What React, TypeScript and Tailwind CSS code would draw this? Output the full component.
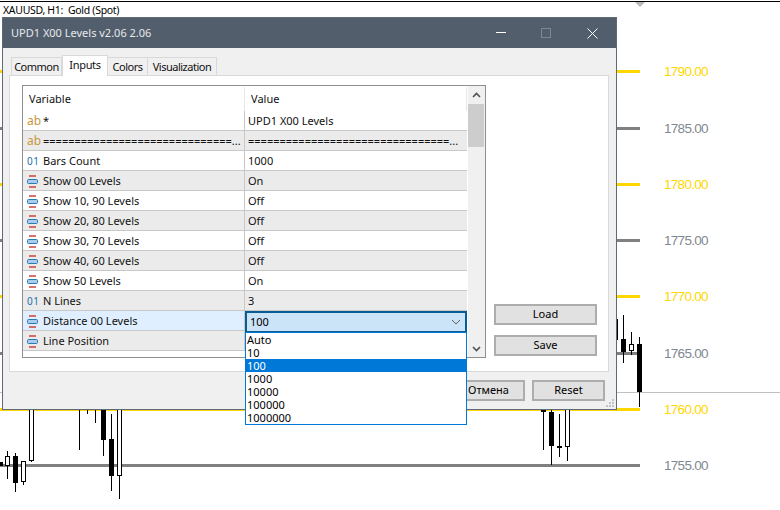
import React from 'react';

const uiFont = { fontFamily: '"Noto Sans", sans-serif' };

const levels = [
  { y: 71, label: '1790.00', gold: true },
  { y: 128, label: '1785.00', gold: false },
  { y: 184, label: '1780.00', gold: true },
  { y: 240, label: '1775.00', gold: false },
  { y: 296, label: '1770.00', gold: true },
  { y: 353, label: '1765.00', gold: false },
  { y: 409, label: '1760.00', gold: true },
  { y: 465, label: '1755.00', gold: false },
];

// x = wick column, wick and body are [top, bottom] in page pixels
const candles: { x: number; wick?: [number, number]; body?: [number, number]; white?: boolean }[] = [
  { x: 0, body: [462, 466] },
  { x: 7, wick: [451, 479], body: [456, 466], white: true },
  { x: 15, wick: [453, 492], body: [456, 483] },
  { x: 23, wick: [461, 485], body: [461, 482], white: true },
  { x: 31, wick: [410, 462], body: [405, 461], white: true },
  { x: 79, wick: [405, 450] },
  { x: 87, wick: [405, 414] },
  { x: 95, wick: [405, 423] },
  { x: 103, wick: [405, 456], body: [405, 440] },
  { x: 111, wick: [414, 491], body: [439, 476] },
  { x: 119, wick: [405, 499], body: [405, 476], white: true },
  { x: 543, wick: [405, 450], body: [405, 412] },
  { x: 551, wick: [405, 465], body: [412, 446] },
  { x: 559, wick: [414, 457], body: [446, 447] },
  { x: 567, wick: [405, 461], body: [405, 447], white: true },
  { x: 615, body: [319, 340] },
  { x: 623, wick: [315, 363], body: [339, 352] },
  { x: 631, wick: [332, 355], body: [344, 351], white: true },
  { x: 639, wick: [337, 407], body: [344, 392] },
];

const rows = [
  { icon: 'ab', name: '*', value: 'UPD1 X00 Levels' },
  { icon: 'ab', name: '==============================...', value: '================================...' },
  { icon: '01', name: 'Bars Count', value: '1000' },
  { icon: 'enum', name: 'Show 00 Levels', value: 'On' },
  { icon: 'enum', name: 'Show 10, 90 Levels', value: 'Off' },
  { icon: 'enum', name: 'Show 20, 80 Levels', value: 'Off' },
  { icon: 'enum', name: 'Show 30, 70 Levels', value: 'Off' },
  { icon: 'enum', name: 'Show 40, 60 Levels', value: 'Off' },
  { icon: 'enum', name: 'Show 50 Levels', value: 'On' },
  { icon: '01', name: 'N Lines', value: '3' },
  { icon: 'enum', name: 'Distance 00 Levels', value: '' },
  { icon: 'enum', name: 'Line Position', value: '' },
];

const options = ['Auto', '10', '100', '1000', '10000', '100000', '1000000'];

const RowIcon: React.FC<{ kind: string }> = ({ kind }) => {
  if (kind === 'ab') return <span className="w-4 shrink-0 text-[12px] leading-none text-[#c8963c]">ab</span>;
  if (kind === '01') return <span className="w-4 shrink-0 text-[10px] leading-none tracking-[0.5px] text-[#1f6fa8]">01</span>;
  return (
    <svg width="11" height="13" viewBox="0 0 11 13" className="mr-[5px] shrink-0">
      <path d="M2 1H9M2 12H9" stroke="#c8453c" strokeWidth="1.5" fill="none" />
      <rect x="0.5" y="4.5" width="10" height="4" rx="1" stroke="#2a78b8" fill="#a9cdea" />
    </svg>
  );
};

const Tab: React.FC<{ label: string; width: string; active?: boolean }> = ({ label, width, active }) =>
  active ? (
    <div className={`${width} h-[21px] -mb-px z-10 bg-white border border-b-0 border-[#d9d9d9] text-center leading-[18px] tracking-[-0.3px]`}>{label}</div>
  ) : (
    <div className={`${width} h-[18px] border border-b-0 border-l-0 first:border-l border-[#d9d9d9] text-center leading-[17px] tracking-[-0.5px]`}>{label}</div>
  );

const Button: React.FC<{ label: string }> = ({ label }) => (
  <div className="w-[73px] h-[21px] flex items-center justify-center bg-[#e1e1e1] border-2 border-[#adadad] text-black">{label}</div>
);

const App: React.FC = () => {
  return (
    <div className="relative w-[780px] h-[510px] bg-white overflow-hidden text-[11px] text-[#111]" style={uiFont}>
      {/* Chart */}
      <div className="absolute top-px left-0 w-full h-px bg-black" />
      <div className="absolute left-[3px] top-[3px] text-[10.5px] tracking-[-0.3px] leading-[14px] text-black">XAUUSD, H1:&nbsp; Gold (Spot)</div>
      <div className="absolute left-[635px] top-[2px] w-0 h-0 border-x-[5px] border-t-[5px] border-x-transparent border-t-[#b8b8b8]" />

      {levels.map((l) => (
        <React.Fragment key={l.label}>
          <div
            className={`absolute left-0 h-[3px] w-[640px] ${l.gold ? 'bg-[#ffd700]' : 'bg-[#808080]'}`}
            style={{ top: l.y - 1 }}
          />
          <div
            className={`absolute left-[664px] h-4 leading-4 text-[13.5px] tracking-[-0.7px] ${l.gold ? 'text-[#ffd700]' : 'text-[#808890]'}`}
            style={{ top: l.y - 7, fontFamily: '"Liberation Sans", sans-serif' }}
          >
            {l.label}
          </div>
        </React.Fragment>
      ))}
      <div className="absolute left-0 top-[392px] w-[780px] h-px bg-[#c0c0c0]" />

      {candles.map((c) => (
        <React.Fragment key={c.x}>
          {c.wick && (
            <div className="absolute w-px bg-black" style={{ left: c.x, top: c.wick[0], height: c.wick[1] - c.wick[0] }} />
          )}
          {c.body && (
            <div
              className={`absolute w-[5px] border border-black ${c.white ? 'bg-white' : 'bg-black'}`}
              style={{ left: c.x - 2, top: c.body[0], height: c.body[1] - c.body[0] }}
            />
          )}
        </React.Fragment>
      ))}

      {/* Dialog */}
      <div className="absolute left-[2px] top-[17px] w-[615px] h-[393px] flex flex-col bg-[#f0f0f0] border border-[#5f6a77]">
        <div className="h-[30px] shrink-0 flex items-center bg-[#525e6c] pl-[8px] text-[#e6e9ec]">
          <span className="flex-1">UPD1 X00 Levels v2.06 2.06</span>
          <svg width="10" height="2" className="mr-[35px]"><path d="M0 .5H10" stroke="#fff" /></svg>
          <svg width="10" height="10" className="mr-[36px]"><rect x=".5" y=".5" width="9" height="9" fill="none" stroke="#7d8894" /></svg>
          <svg width="11" height="11" className="mr-[18px]"><path d="M.5 .5L10.5 10.5M10.5 .5L.5 10.5" stroke="#fff" fill="none" /></svg>
        </div>

        <div className="h-[27px] shrink-0 flex items-end pl-[8px]">
          <Tab label="Common" width="w-[51px]" />
          <Tab label="Inputs" width="w-[46px]" active />
          <Tab label="Colors" width="w-[40px]" />
          <Tab label="Visualization" width="w-[69px]" />
        </div>

        <div className="ml-[6px] w-[600px] h-[297px] shrink-0 flex bg-white border border-[#d9d9d9] pl-[12px] pt-[9px]">
          <div className="w-[464px] h-[273px] flex flex-col overflow-hidden border border-[#8f8f8f]">
            <div className="flex-1 min-h-0 flex">
              <div className="w-[444px] overflow-hidden">
                <div className="h-[25px] flex items-center pt-px">
                  <div className="w-[221px] pl-[6px]">Variable</div>
                  <div className="h-full flex-1 pl-[6px] flex items-center border-l border-r border-[#e6e6e6]">Value</div>
                </div>
                {rows.map((r, i) => (
                  <div
                    key={i}
                    className={`h-5 flex items-center border-b border-[#c8c8c8] ${
                      r.name === 'Distance 00 Levels' ? 'bg-[#e0efff]' : i % 2 === 1 ? 'bg-[#ebebeb]' : 'bg-white'
                    }`}
                  >
                    <div className="w-[221px] flex items-center pl-[4px] pt-px overflow-hidden whitespace-nowrap">
                      <RowIcon kind={r.icon} />
                      <span>{r.name}</span>
                    </div>
                    <div className="h-full flex-1 pl-[3px] pt-px flex items-center border-l border-[#c8c8c8] overflow-hidden whitespace-nowrap">{r.value}</div>
                  </div>
                ))}
              </div>
              <div className="ml-px w-[17px] flex flex-col items-stretch bg-[#f0f0f0] pr-px">
                <div className="h-[18px] flex items-center justify-center">
                  <svg width="9" height="6"><path d="M1 5L4.5 1.5L8 5" stroke="#505050" strokeWidth="1.6" fill="none" /></svg>
                </div>
                <div className="h-[43px] bg-[#cdcdcd]" />
                <div className="flex-1" />
                <div className="h-[17px] flex items-center justify-center">
                  <svg width="9" height="6"><path d="M1 1L4.5 4.5L8 1" stroke="#505050" strokeWidth="1.6" fill="none" /></svg>
                </div>
              </div>
            </div>
          </div>
          <div className="ml-[8px] h-[271px] flex flex-col justify-end">
            <div className="mb-[10px] w-[103px] h-[21px] flex items-center justify-center bg-[#e1e1e1] border-2 border-[#adadad] text-black">Load</div>
            <div className="w-[103px] h-[21px] flex items-center justify-center bg-[#e1e1e1] border-2 border-[#adadad] text-black">Save</div>
          </div>
        </div>

        <div className="flex-1 flex justify-end gap-[7px] pt-[8px] pr-[11px]">
          <Button label="OK" />
          <Button label="Отмена" />
          <Button label="Reset" />
        </div>

        <svg width="10" height="10" className="absolute right-px bottom-px">
          <path d="M7 1h2v2H7zM4 4h2v2H4zM7 4h2v2H7zM1 7h2v2H1zM4 7h2v2H4zM7 7h2v2H7z" fill="#c4c4c4" />
        </svg>
      </div>

      {/* Open combo box */}
      <div className="absolute left-[245px] top-[311px] w-[222px] h-[22px] flex items-center bg-[#cce4f7] border-2 border-[#0a5c94] pl-[3px] pr-[4px] text-black">
        <span className="flex-1">100</span>
        <svg width="10" height="6"><path d="M1 1L5 5L9 1" stroke="#606060" fill="none" /></svg>
      </div>
      <div className="absolute left-[245px] top-[332px] w-[222px] h-[93px] bg-white border border-[#0078d7] text-black">
        {options.map((o) => (
          <div key={o} className={`h-[13px] pl-px leading-[13px] ${o === '100' ? 'bg-[#0078d7] text-white' : ''}`}>{o}</div>
        ))}
      </div>
    </div>
  );
};

export default App;
